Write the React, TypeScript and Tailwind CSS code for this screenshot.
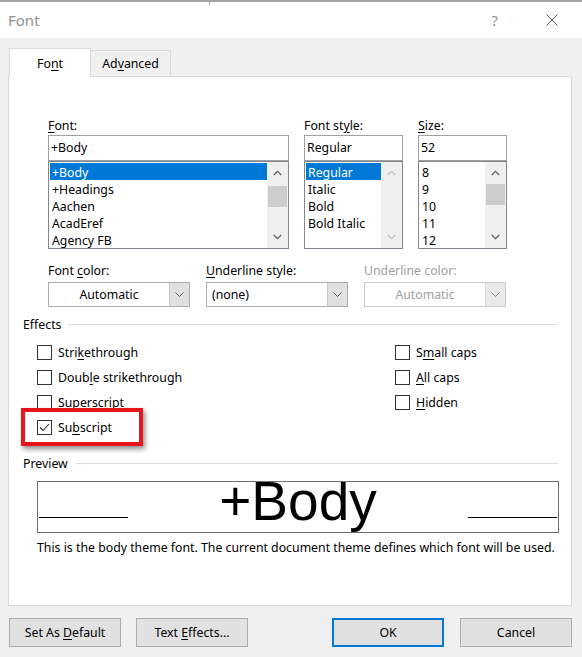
import React from "react";

const U = ({ children }: { children: React.ReactNode }) => (
  <span className="underline underline-offset-[2px] decoration-1">{children}</span>
);

const Chevron = ({ dir, color = "#606060" }: { dir: "up" | "down"; color?: string }) => (
  <svg width="9" height="6" viewBox="0 0 9 6">
    <path
      d={dir === "up" ? "M0.8 5 L4.5 1.3 L8.2 5" : "M0.8 1 L4.5 4.7 L8.2 1"}
      fill="none"
      stroke={color}
      strokeWidth="1.3"
    />
  </svg>
);

const SmallChevron = ({ color = "#606060" }: { color?: string }) => (
  <svg width="9" height="5" viewBox="0 0 9 5">
    <path d="M0.5 0.5 L4.5 4.5 L8.5 0.5" fill="none" stroke={color} strokeWidth="1" />
  </svg>
);

function ListBox({
  items,
  width,
  itemsWidth,
  selected,
  thumbTop,
  disabled,
}: {
  items: string[];
  width: string;
  itemsWidth: string;
  selected: number;
  thumbTop: number | null;
  disabled?: boolean;
}) {
  return (
    <div className={`${width} h-[88px] border border-[#828790] bg-white flex`}>
      <div className={`${itemsWidth} pl-[1px] pt-[1px] flex flex-col`}>
        {items.map((it, i) => (
          <div
            key={it}
            className={`h-[17px] leading-[17px] pt-[1px] pl-[2px] whitespace-nowrap ${
              i === selected ? "bg-[#0078d7] text-white" : "text-black"
            }`}
          >
            {it}
          </div>
        ))}
      </div>
      <div className="w-[21px] bg-[#f0f0f0] flex flex-col">
        <div className="h-[22px] flex items-center justify-center">
          <Chevron dir="up" color={disabled ? "#c4c4c4" : "#606060"} />
        </div>
        {thumbTop !== null ? (
          <div className="h-[21px] bg-[#cdcdcd] mx-[1px]" style={{ marginTop: thumbTop }} />
        ) : null}
        <div className="flex-1" />
        <div className="h-[22px] flex items-center justify-center">
          <Chevron dir="down" color={disabled ? "#c4c4c4" : "#606060"} />
        </div>
      </div>
    </div>
  );
}

function Dropdown({
  text,
  center,
  disabled,
}: {
  text: string;
  center?: boolean;
  disabled?: boolean;
}) {
  return (
    <div
      className={`w-[142px] h-[25px] border flex bg-white ${
        disabled ? "border-[#cccccc]" : "border-[#adadad]"
      }`}
    >
      <div
        className={`flex-1 flex items-center pt-[1px] ${center ? "justify-center" : "pl-[5px]"} ${
          disabled ? "text-[#a0a0a0]" : "text-black"
        }`}
      >
        {text}
      </div>
      <div
        className={`w-[20px] flex items-center justify-center ${
          disabled ? "bg-[#eaeaea] border-l border-[#dcdcdc]" : "bg-[#e1e1e1] border-l border-[#c8c8c8]"
        }`}
      >
        <SmallChevron color={disabled ? "#8a8a8a" : "#606060"} />
      </div>
    </div>
  );
}

function Check({ checked, children }: { checked?: boolean; children: React.ReactNode }) {
  return (
    <div className="h-[25px] flex items-center gap-[6px]">
      <div className="w-[15px] h-[15px] border border-[#333333] bg-white flex items-center justify-center">
        {checked ? (
          <svg width="11" height="9" viewBox="0 0 11 9">
            <path d="M1 4.5 L4 7.5 L10 1" fill="none" stroke="#333333" strokeWidth="1.1" />
          </svg>
        ) : null}
      </div>
      <span className="pt-[1px]">{children}</span>
    </div>
  );
}

function Button({ children, primary }: { children: React.ReactNode; primary?: boolean }) {
  return (
    <div
      className={`w-[112px] h-[29px] bg-[#e1e1e1] flex items-center justify-center ${
        primary ? "border-2 border-[#0078d7]" : "border border-[#adadad]"
      }`}
    >
      <span className="whitespace-pre pt-[1px]">{children}</span>
    </div>
  );
}

export default function App() {
  return (
    <div className="w-[582px] h-[657px] bg-[#f0f0f0] overflow-hidden text-[12.3px] text-black font-['Noto_Sans',sans-serif] relative">
      {/* title bar */}
      <div className="h-[38px] bg-white border-t-2 border-[#a3a3a3] flex items-center pl-[8px] relative">
        <div className="absolute left-[209px] top-0 w-px h-[3px] bg-[#a3a3a3]" />
        <span className="text-[15px] text-[#939393]">Font</span>
        <span className="ml-auto text-[15px] text-[#939393]">?</span>
        <div className="ml-[48px] mr-[24px]">
          <svg width="12" height="12" viewBox="0 0 12 12">
            <path d="M0.5 0.5 L11.5 11.5 M11.5 0.5 L0.5 11.5" stroke="#555555" strokeWidth="1" />
          </svg>
        </div>
      </div>

      <div className="px-[8px] pt-[10px]">
        {/* tabs */}
        <div className="h-[28px] flex items-end pl-[1px]">
          <div className="w-[82px] h-[29px] -mb-px pt-[3px] bg-white border border-b-0 border-[#d9d9d9] flex items-center justify-center relative z-10">
            <span>
              Fo<U>n</U>t
            </span>
          </div>
          <div className="w-[80px] h-[26px] pt-[2px] border border-l-0 border-b-0 border-[#d9d9d9] bg-[#f0f0f0] flex items-center justify-center">
            <span>
              Ad<U>v</U>anced
            </span>
          </div>
        </div>

        {/* panel */}
        <div className="w-[564px] h-[530px] bg-white border border-[#d9d9d9] pl-[14px] pr-[13px] pt-[40px]">
          <div className="ml-[25px] flex gap-[15px]">
            <div className="flex flex-col">
              <div className="h-[16px] leading-[16px] pt-[1px]">
                <U>F</U>ont:
              </div>
              <div className="mt-[2px] w-[241px] h-[26px] border border-[#a0a0a0] flex items-center pl-[2px] pt-[1px]">
                +Body
              </div>
              <ListBox
                items={["+Body", "+Headings", "Aachen", "AcadEref", "Agency FB"]}
                width="w-[241px]"
                itemsWidth="w-[218px]"
                selected={0}
                thumbTop={2}
              />
            </div>
            <div className="flex flex-col">
              <div className="h-[16px] leading-[16px] pt-[1px]">
                Font st<U>y</U>le:
              </div>
              <div className="mt-[2px] w-[99px] h-[26px] border border-[#a0a0a0] flex items-center pl-[2px] pt-[1px]">
                Regular
              </div>
              <ListBox
                items={["Regular", "Italic", "Bold", "Bold Italic"]}
                width="w-[99px]"
                itemsWidth="w-[76px]"
                selected={0}
                thumbTop={null}
                disabled
              />
            </div>
            <div className="flex flex-col">
              <div className="h-[16px] leading-[16px] pt-[1px]">
                <U>S</U>ize:
              </div>
              <div className="mt-[2px] w-[89px] h-[26px] border border-[#a0a0a0] flex items-center pl-[2px] pt-[1px]">
                52
              </div>
              <ListBox
                items={["8", "9", "10", "11", "12"]}
                width="w-[89px]"
                itemsWidth="w-[66px]"
                selected={-1}
                thumbTop={0}
              />
            </div>
          </div>

          {/* color row */}
          <div className="ml-[25px] mt-[13px] flex gap-[16px]">
            <div className="flex flex-col gap-[4px]">
              <div className="h-[16px] leading-[16px] pt-[1px]">
                Font <U>c</U>olor:
              </div>
              <Dropdown text="Automatic" center />
            </div>
            <div className="flex flex-col gap-[4px]">
              <div className="h-[16px] leading-[16px] pt-[1px]">
                <U>U</U>nderline style:
              </div>
              <Dropdown text="(none)" />
            </div>
            <div className="flex flex-col gap-[4px]">
              <div className="h-[16px] leading-[16px] pt-[1px] text-[#a0a0a0]">Underline color:</div>
              <Dropdown text="Automatic" center disabled />
            </div>
          </div>

          {/* Effects */}
          <div className="mt-[9px] h-[16px] flex items-center gap-[7px]">
            <span className="leading-[16px] pt-[1px]">Effects</span>
            <div className="flex-1 h-px bg-[#dcdcdc]" />
          </div>
          <div className="mt-[8px] ml-[14px] flex">
            <div className="w-[358px] flex flex-col">
              <Check>
                Stri<U>k</U>ethrough
              </Check>
              <Check>
                Doub<U>l</U>e strikethrough
              </Check>
              <Check>
                Su<U>p</U>erscript
              </Check>
              <div className="relative">
                <Check checked>
                  Su<U>b</U>script
                </Check>
                <div className="absolute -left-[16px] -top-[7px] w-[122px] h-[38px] border-[4px] border-[#e8141b] shadow-[2px_3px_5px_rgba(0,0,0,0.45)]" />
              </div>
            </div>
            <div className="flex flex-col">
              <Check>
                S<U>m</U>all caps
              </Check>
              <Check>
                <U>A</U>ll caps
              </Check>
              <Check>
                <U>H</U>idden
              </Check>
            </div>
          </div>

          {/* Preview */}
          <div className="mt-[15px] h-[16px] flex items-center gap-[8px]">
            <span className="leading-[16px] pt-[1px]">Preview</span>
            <div className="flex-1 h-px bg-[#dcdcdc]" />
          </div>
          <div className="mt-[10px] ml-[14px] w-[522px] h-[52px] border border-[#6e6e6e] flex overflow-hidden">
            <div className="w-[89px] h-px bg-black mt-[35px] ml-[1px]" />
            <div className="flex-1 h-[50px] text-center font-['Liberation_Sans',Arial,sans-serif] text-[55px] leading-[38px]">
              +Body
            </div>
            <div className="w-[89px] h-px bg-black mt-[35px] mr-[1px]" />
          </div>
          <div className="mt-[6px] ml-[14px] h-[16px] leading-[16px] pt-[1px] whitespace-nowrap">
            This is the body theme font. The current document theme defines which font will be used.
          </div>
        </div>
      </div>

      {/* buttons */}
      <div className="mt-[12px] flex pl-[9px] pr-[10px]">
        <div className="flex gap-[15px]">
          <Button>
            Set As <U>D</U>efault
          </Button>
          <Button>
            Text <U>E</U>ffects...
          </Button>
        </div>
        <div className="ml-auto flex gap-[16px]">
          <Button primary>OK</Button>
          <Button>Cancel</Button>
        </div>
      </div>
    </div>
  );
}
